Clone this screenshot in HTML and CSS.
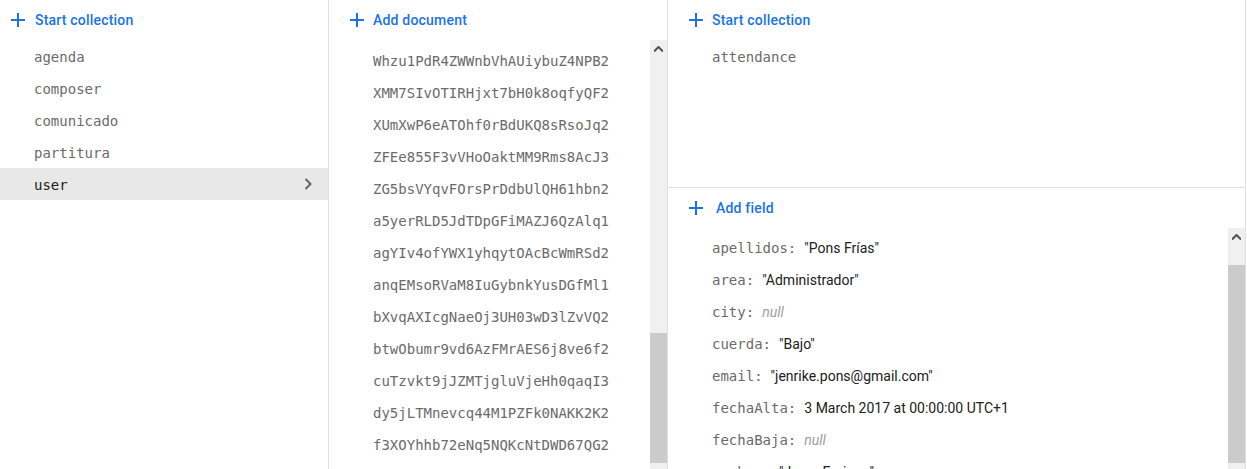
FILE: index.html
```html
<!DOCTYPE html>
<html>
<head>
<meta charset="utf-8">
<link rel="stylesheet" href="styles.css">
</head>
<body>
<div class="app">
  <section class="panel left">
    <div class="head">
      <svg class="plus" width="14" height="14" viewBox="0 0 14 14"><path d="M7 0v14M0 7h14" stroke="#1a73e8" stroke-width="2"/></svg>
      <span class="label">Start collection</span>
    </div>
    <ul class="list">
      <li class="item">agenda</li>
      <li class="item">composer</li>
      <li class="item">comunicado</li>
      <li class="item">partitura</li>
      <li class="item selected">user
        <svg class="chev" width="8" height="12" viewBox="0 0 8 12"><path d="M1.5 1l5 5-5 5" fill="none" stroke="#5f6368" stroke-width="2"/></svg>
      </li>
    </ul>
  </section>

  <section class="panel mid">
    <div class="head">
      <svg class="plus" width="14" height="14" viewBox="0 0 14 14"><path d="M7 0v14M0 7h14" stroke="#1a73e8" stroke-width="2"/></svg>
      <span class="label gap9">Add document</span>
    </div>
    <div class="scroll">
      <ul class="list docs">
        <li class="item">Whzu1PdR4ZWWnbVhAUiybuZ4NPB2</li>
        <li class="item">XMM7SIvOTIRHjxt7bH0k8oqfyQF2</li>
        <li class="item">XUmXwP6eATOhf0rBdUKQ8sRsoJq2</li>
        <li class="item">ZFEe855F3vVHoOaktMM9Rms8AcJ3</li>
        <li class="item">ZG5bsVYqvFOrsPrDdbUlQH61hbn2</li>
        <li class="item">a5yerRLD5JdTDpGFiMAZJ6QzAlq1</li>
        <li class="item">agYIv4ofYWX1yhqytOAcBcWmRSd2</li>
        <li class="item">anqEMsoRVaM8IuGybnkYusDGfMl1</li>
        <li class="item">bXvqAXIcgNaeOj3UH03wD3lZvVQ2</li>
        <li class="item">btwObumr9vd6AzFMrAES6j8ve6f2</li>
        <li class="item">cuTzvkt9jJZMTjgluVjeHh0qaqI3</li>
        <li class="item">dy5jLTMnevcq44M1PZFk0NAKK2K2</li>
        <li class="item">f3XOYhhb72eNq5NQKcNtDWD67QG2</li>
      </ul>
      <div class="sbar">
        <div class="sb-btn"><svg width="9" height="6" viewBox="0 0 9 6"><path d="M0 5.5L4.5 1 9 5.5" fill="none" stroke="#505050" stroke-width="2"/></svg></div>
        <div class="sb-track"><div class="sb-thumb mid-thumb"></div></div>
      </div>
    </div>
  </section>

  <section class="panel right">
    <div class="top">
      <div class="head">
        <svg class="plus" width="14" height="14" viewBox="0 0 14 14"><path d="M7 0v14M0 7h14" stroke="#1a73e8" stroke-width="2"/></svg>
        <span class="label gap9">Start collection</span>
      </div>
      <ul class="list sub">
        <li class="item">attendance</li>
      </ul>
    </div>
    <div class="bottom">
      <div class="head">
        <svg class="plus" width="14" height="14" viewBox="0 0 14 14"><path d="M7 0v14M0 7h14" stroke="#1a73e8" stroke-width="2"/></svg>
        <span class="label gap13">Add field</span>
      </div>
      <div class="scroll">
        <ul class="list fields">
          <li class="field"><span class="key">apellidos:</span><span class="val">"Pons Frías"</span></li>
          <li class="field"><span class="key">area:</span><span class="val">"Administrador"</span></li>
          <li class="field"><span class="key">city:</span><span class="val null">null</span></li>
          <li class="field"><span class="key">cuerda:</span><span class="val">"Bajo"</span></li>
          <li class="field"><span class="key">email:</span><span class="val">"jenrike.pons@gmail.com"</span></li>
          <li class="field"><span class="key">fechaAlta:</span><span class="val">3 March 2017 at 00:00:00 UTC+1</span></li>
          <li class="field"><span class="key">fechaBaja:</span><span class="val null">null</span></li>
          <li class="field"><span class="key">nombre:</span><span class="val">"Jorge Enrique"</span></li>
        </ul>
        <div class="sbar">
          <div class="sb-btn"><svg width="9" height="6" viewBox="0 0 9 6"><path d="M0 5.5L4.5 1 9 5.5" fill="none" stroke="#505050" stroke-width="2"/></svg></div>
          <div class="sb-track"><div class="sb-thumb right-thumb"></div></div>
        </div>
      </div>
    </div>
  </section>
</div>
</body>
</html>
```

FILE: styles.css
```css
* { box-sizing: border-box; }
html, body { margin: 0; padding: 0; background: #fff; }
body { font-family: Roboto, "Noto Sans", sans-serif; font-size: 14px; color: #212121; }

.app {
  display: flex;
  height: 469px;
  width: 1247px;
  overflow: hidden;
}

.panel {
  display: flex;
  flex-direction: column;
  border-right: 1px solid #e0e0e0;
  overflow: hidden;
}
.left { width: 329px; }
.mid { width: 339px; }
.right { width: 578px; }

.head {
  height: 40px;
  display: flex;
  align-items: center;
  flex-shrink: 0;
}
.left .head { padding-left: 11px; }
.mid .head, .right .head { padding-left: 21px; }

.plus { flex-shrink: 0; display: block; }
.label {
  color: #1a73e8;
  font-weight: 500;
  font-size: 14px;
  margin-left: 10px;
  letter-spacing: 0.2px;
}
.label.gap9 { margin-left: 9px; }
.label.gap13 { margin-left: 13px; }

.list { list-style: none; margin: 0; padding: 0; }

.item {
  height: 32px;
  display: flex;
  align-items: center;
  font-family: "DejaVu Sans Mono", "Liberation Mono", monospace;
  font-size: 14px;
  color: #6b6b6b;
  padding-left: 34px;
  padding-top: 2px;
  white-space: nowrap;
}
.item.selected {
  background: #e8e8e8;
  color: #212121;
  justify-content: space-between;
  padding-right: 16px;
}
.chev { display: block; margin-top: -2px; }

.scroll {
  flex: 1;
  display: flex;
  overflow: hidden;
}
.scroll .list { flex: 1; overflow: hidden; }

.docs { padding-top: 4px; }
.docs .item { padding-left: 44px; }

.sub .item { padding-left: 44px; }

.top {
  height: 188px;
  border-bottom: 1px solid #e0e0e0;
  flex-shrink: 0;
}
.bottom {
  flex: 1;
  display: flex;
  flex-direction: column;
  overflow: hidden;
}

.fields { padding-top: 4px; }
.field {
  height: 32px;
  display: flex;
  align-items: center;
  padding-left: 44px;
  white-space: nowrap;
}
.key {
  font-family: "DejaVu Sans Mono", "Liberation Mono", monospace;
  color: #6b6b6b;
  font-size: 14px;
}
.val {
  margin-left: 8px;
  color: #212121;
  font-size: 14px;
}
.val.null {
  color: #9e9e9e;
  font-style: italic;
}

.sbar {
  width: 17px;
  flex-shrink: 0;
  display: flex;
  flex-direction: column;
  background: #f0f0f0;
}
.sb-btn {
  height: 17px;
  display: flex;
  align-items: center;
  justify-content: center;
  flex-shrink: 0;
}
.sb-btn svg { display: block; }
.sb-track { flex: 1; }
.sb-thumb { background: #cbcbcb; }
.mid-thumb { margin-top: 276px; height: 130px; }
.right-thumb { margin-top: 20px; height: 198px; }
```
